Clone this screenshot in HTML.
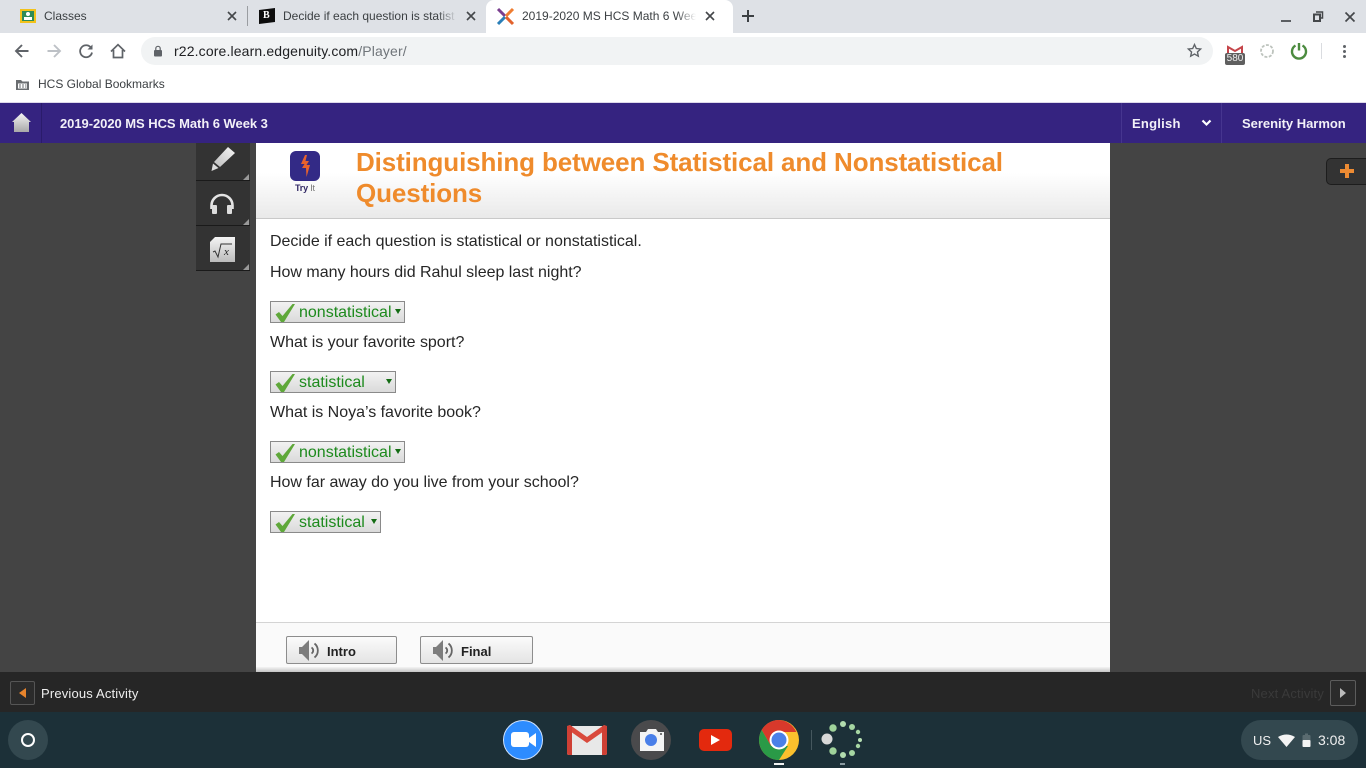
<!DOCTYPE html>
<html><head><meta charset="utf-8"><style>
html,body{margin:0;padding:0;width:1366px;height:768px;overflow:hidden;background:#444;font-family:"Liberation Sans",sans-serif}
.a{position:absolute}
.t{position:absolute;white-space:nowrap}
svg{position:absolute;overflow:visible}
.q{position:absolute;left:270px;font-size:16px;color:#262626;white-space:nowrap;line-height:20px;letter-spacing:-.015px}
.sel{position:absolute;left:270px;height:20px;border:1px solid #8a8a8a;background:linear-gradient(#f2f2f2,#dadada);box-sizing:content-box;color:#1d8a1d;font-size:16px;line-height:21px;white-space:nowrap}
.sel span{position:absolute;left:28px;top:0}
.sel i{position:absolute;top:7px;width:0;height:0;border-left:3px solid transparent;border-right:3px solid transparent;border-top:5px solid #146c14}
.btn{position:absolute;top:636px;height:26px;border:1px solid #8d8d8d;border-radius:2px;background:linear-gradient(#fbfbfb,#e4e4e4);font-size:13px;font-weight:bold;color:#222;line-height:29px}
.tab{position:absolute;font-size:12px;color:#3c4043;top:9px;white-space:nowrap;overflow:hidden}
</style></head><body>

<!-- tab strip -->
<div class="a" style="left:0;top:0;width:1366px;height:33px;background:#dee1e6"></div>
<div class="a" style="left:486px;top:0;width:247px;height:33px;background:#fff;border-radius:8px 8px 0 0"></div>
<div class="a" style="left:247px;top:6px;width:1px;height:20px;background:#9a9da1"></div>
<!-- classroom favicon -->
<div class="a" style="left:20px;top:9px;width:16px;height:14px;background:#f2c21b"></div>
<div class="a" style="left:22px;top:11px;width:12px;height:10px;background:#2e8b57"></div>
<div class="a" style="left:26px;top:12px;width:4px;height:4px;border-radius:2px;background:#fff"></div>
<div class="a" style="left:24px;top:17px;width:8px;height:3px;background:#fff"></div>
<div class="tab" style="left:44px">Classes</div>
<svg style="left:227px;top:11px" width="10" height="10" viewBox="0 0 10 10"><path d="M1 1L9 9M9 1L1 9" stroke="#44474a" stroke-width="1.600"/></svg>
<!-- brainly favicon -->
<svg style="left:259px;top:8px" width="16" height="16" viewBox="0 0 16 16"><path d="M0 2L16 0V14L0 16Z" fill="#0d0d0d"/></svg>
<div class="t" style="left:263px;top:10px;font:bold 10px 'Liberation Serif',serif;color:#fff">B</div>
<div class="tab" style="left:283px;width:174px">Decide if each question is statist</div>
<div class="a" style="left:437px;top:6px;width:20px;height:20px;background:linear-gradient(90deg,rgba(222,225,230,0),#dee1e6)"></div>
<svg style="left:466px;top:11px" width="10" height="10" viewBox="0 0 10 10"><path d="M1 1L9 9M9 1L1 9" stroke="#44474a" stroke-width="1.600"/></svg>
<!-- edgenuity favicon -->
<svg style="left:497px;top:8px" width="17" height="17" viewBox="0 0 17 17"><path d="M1 1L8 8" stroke="#7a3f8f" stroke-width="3"/><path d="M16 1L9 8" stroke="#ef7d31" stroke-width="3"/><path d="M1 16L8 9" stroke="#2a7fb8" stroke-width="3"/><path d="M16 16L9 9" stroke="#e2622c" stroke-width="3"/></svg>
<div class="tab" style="left:522px;width:174px">2019-2020 MS HCS Math 6 Week 3</div>
<div class="a" style="left:676px;top:6px;width:20px;height:20px;background:linear-gradient(90deg,rgba(255,255,255,0),#fff)"></div>
<svg style="left:705px;top:11px" width="10" height="10" viewBox="0 0 10 10"><path d="M1 1L9 9M9 1L1 9" stroke="#44474a" stroke-width="1.600"/></svg>
<svg style="left:741px;top:9px" width="14" height="14" viewBox="0 0 14 14"><path d="M7 1V13M1 7H13" stroke="#3c4043" stroke-width="2"/></svg>
<!-- window controls -->
<div class="a" style="left:1281px;top:20px;width:10px;height:2px;background:#5b5e62"></div>
<svg style="left:1313px;top:11px" width="10" height="11" viewBox="0 0 10 11"><path d="M3 1H9.500V7H7" fill="none" stroke="#44474a" stroke-width="1.500"/><rect x="1" y="3.500" width="6" height="6.500" fill="none" stroke="#44474a" stroke-width="2"/></svg>
<svg style="left:1345px;top:12px" width="10" height="10" viewBox="0 0 10 10"><path d="M0.500 0.500L9.500 9.500M9.500 0.500L0.500 9.500" stroke="#44474a" stroke-width="1.700"/></svg>

<!-- toolbar -->
<div class="a" style="left:0;top:33px;width:1366px;height:70px;background:#fff"></div>
<div class="a" style="left:141px;top:37px;width:1072px;height:28px;background:#f1f3f4;border-radius:14px"></div>
<svg style="left:14px;top:43px" width="16" height="16" viewBox="0 0 16 16"><path d="M14.500 8H2.500M8 2L2 8L8 14" fill="none" stroke="#5f6368" stroke-width="1.900"/></svg>
<svg style="left:46px;top:43px" width="16" height="16" viewBox="0 0 16 16"><path d="M1.500 8H13.500M8 2L14 8L8 14" fill="none" stroke="#bdc1c6" stroke-width="1.900"/></svg>
<svg style="left:78px;top:43px" width="16" height="16" viewBox="0 0 16 16"><path d="M13.200 5A6 6 0 1 0 14 9.500" fill="none" stroke="#5f6368" stroke-width="1.800"/><path d="M14.500 1.500V6.500H9.500Z" fill="#5f6368"/></svg>
<svg style="left:110px;top:43px" width="16" height="16" viewBox="0 0 16 16"><path d="M1 8.500L8 1.700L15 8.500M3.500 7V14.500H12.500V7" fill="none" stroke="#5f6368" stroke-width="1.700"/></svg>
<svg style="left:153px;top:45px" width="10" height="12" viewBox="0 0 10 12"><path d="M2.800 5V3.500a2.200 2.200 0 0 1 4.400 0V5" fill="none" stroke="#5f6368" stroke-width="1.200"/><rect x="1" y="5" width="8" height="6.500" rx="1" fill="#5f6368"/></svg>
<div class="t" style="left:174px;top:43px;font-size:14px;color:#202124;line-height:16px;letter-spacing:.14px">r22.core.learn.edgenuity.com<span style="color:#70757a">/Player/</span></div>
<svg style="left:1187px;top:43px" width="15" height="15" viewBox="0 0 24 24"><path d="M12 2.500l2.900 6.300 6.900.8-5.100 4.700 1.400 6.800L12 17.700 5.900 21.100l1.400-6.800L2.200 9.600l6.900-.8z" fill="none" stroke="#5f6368" stroke-width="2.200"/></svg>
<!-- gmail ext -->
<svg style="left:1227px;top:46px" width="16" height="8" viewBox="0 0 16 8"><path d="M1 8V1L8 5L15 1V8" fill="none" stroke="#c5454a" stroke-width="2"/></svg>
<div class="a" style="left:1225px;top:53px;width:20px;height:12px;background:#5f5f5f;border-radius:2px;color:#eee;font-size:10px;line-height:12px;text-align:center">580</div>
<svg style="left:1259px;top:43px" width="16" height="16" viewBox="0 0 16 16"><circle cx="8" cy="8" r="6" fill="none" stroke="#bdc3bd" stroke-width="1.800" stroke-dasharray="3 1.500"/></svg>
<svg style="left:1290px;top:42px" width="18" height="18" viewBox="0 0 18 18"><path d="M5.500 3.500A7 7 0 1 0 12.500 3.500" fill="none" stroke="#4c8b3f" stroke-width="2.400"/><path d="M9 1V8.500" stroke="#4c8b3f" stroke-width="2.400"/></svg>
<div class="a" style="left:1321px;top:43px;width:1px;height:16px;background:#dadce0"></div>
<div class="a" style="left:1343px;top:45px;width:3px;height:3px;border-radius:2px;background:#5f6368;box-shadow:0 5px 0 #5f6368,0 10px 0 #5f6368"></div>

<!-- bookmarks -->
<svg style="left:15px;top:78px" width="15" height="13" viewBox="0 0 15 13"><path d="M1 2H6L7.500 3.500H14V12H1Z" fill="#6a6d70"/><path d="M3 5.500H12V10.500H3Z" fill="#fff"/><path d="M4 6.500H6V7.500H4ZM7 6.500H9V7.500H7ZM10 6.500H11.500V7.500H10ZM4 8.500H6V9.500H4ZM7 8.500H9V9.500H7ZM10 8.500H11.500V9.500H10Z" fill="#6a6d70"/></svg>
<div class="t" style="left:38px;top:77px;font-size:12px;color:#3c4043;line-height:14px">HCS Global Bookmarks</div>

<!-- stage -->
<div class="a" style="left:0;top:143px;width:1366px;height:529px;background:#444"></div>

<!-- purple nav -->
<div class="a" style="left:0;top:103px;width:1366px;height:40px;background:#352380;box-shadow:0 -1px 0 #ddd8ea"></div>
<div class="a" style="left:41px;top:103px;width:1px;height:40px;background:#2a1b6b"></div>
<div class="a" style="left:1121px;top:103px;width:1px;height:40px;background:#46358f"></div>
<div class="a" style="left:1221px;top:103px;width:1px;height:40px;background:#46358f"></div>
<svg style="left:12px;top:112px" width="19" height="20" viewBox="0 0 19 20"><defs><linearGradient id="h" x1="0" y1="0" x2="0" y2="1"><stop offset="0" stop-color="#f4f4f4"/><stop offset="1" stop-color="#a8a8a8"/></linearGradient></defs><path d="M9.500 1L19 10H17V20H2V10H0Z" fill="url(#h)"/></svg>
<div class="t" style="left:60px;top:116px;font-size:13px;font-weight:bold;color:#f2f0f8;line-height:16px;letter-spacing:-.05px">2019-2020 MS HCS Math 6 Week 3</div>
<div class="t" style="left:1132px;top:116px;font-size:13px;font-weight:bold;color:#f2f0f8;line-height:16px;letter-spacing:.25px">English</div>
<svg style="left:1201px;top:119px" width="11" height="8" viewBox="0 0 11 8"><path d="M1.500 1.500L5.500 5.500L9.500 1.500" fill="none" stroke="#fff" stroke-width="2.200"/></svg>
<div class="t" style="left:1242px;top:116px;font-size:13px;font-weight:bold;color:#f2f0f8;line-height:16px;letter-spacing:-.02px">Serenity Harmon</div>

<!-- side tools -->
<div class="a" style="left:196px;top:143px;width:54px;height:37px;background:#333;border-bottom:1px solid #1a1a1a"></div>
<div class="a" style="left:196px;top:181px;width:54px;height:44px;background:#333;border-bottom:1px solid #1a1a1a"></div>
<div class="a" style="left:196px;top:226px;width:54px;height:44px;background:#333;border-bottom:1px solid #1a1a1a"></div>
<div class="a" style="left:243px;top:174px;border-left:6px solid transparent;border-bottom:6px solid #999"></div>
<div class="a" style="left:243px;top:219px;border-left:6px solid transparent;border-bottom:6px solid #999"></div>
<div class="a" style="left:243px;top:264px;border-left:6px solid transparent;border-bottom:6px solid #999"></div>
<svg style="left:210px;top:146px" width="26" height="26" viewBox="0 0 26 26"><defs><linearGradient id="p" x1="1" y1="0" x2="0" y2="1"><stop offset="0" stop-color="#f6f6f6"/><stop offset="1" stop-color="#bdbdbd"/></linearGradient></defs><path d="M18 1L25 7L10 21L4 16Z" fill="url(#p)"/><path d="M3 17.500L8.500 22L1.500 25Z" fill="#ddd"/></svg>
<svg style="left:208px;top:194px" width="28" height="21" viewBox="0 0 28 21"><path d="M3.500 15V11.500A10.500 10.500 0 0 1 24.500 11.500V15" fill="none" stroke="#e4e4e4" stroke-width="2.600"/><rect x="4" y="11" width="5" height="9" rx="1" fill="#ddd"/><rect x="19" y="11" width="5" height="9" rx="1" fill="#ddd"/></svg>
<div class="a" style="left:210px;top:237px;width:25px;height:25px;background:linear-gradient(#f4f4f4,#bcbcbc)"></div>
<div class="a" style="left:210px;top:237px;border-right:5px solid transparent;border-top:5px solid #333"></div>
<svg style="left:213px;top:243px" width="20" height="16" viewBox="0 0 20 16"><path d="M0 9L2 8L5 14L8 1H19" fill="none" stroke="#333" stroke-width="1"/></svg>
<div class="t" style="left:224px;top:246px;font:italic 11px 'Liberation Serif',serif;color:#222">x</div>

<!-- plus tab -->
<div class="a" style="left:1326px;top:158px;width:40px;height:27px;background:#333;border:1px solid #1d1d1d;border-right:none;border-radius:5px 0 0 5px;box-sizing:border-box"></div>
<div class="a" style="left:1340px;top:169px;width:14px;height:4px;background:#ed8b33"></div>
<div class="a" style="left:1345px;top:164px;width:4px;height:14px;background:#ed8b33"></div>

<!-- content -->
<div class="a" style="left:256px;top:143px;width:854px;height:529px;background:#fff"></div>
<div class="a" style="left:256px;top:143px;width:854px;height:75px;background:linear-gradient(#fff 40%,#e9e9e9);border-bottom:1px solid #c9c9c9"></div>
<div class="a" style="left:290px;top:151px;width:30px;height:30px;background:#332a86;border-radius:6px"></div>
<svg style="left:299px;top:154px" width="12" height="24" viewBox="0 0 12 24"><path d="M6 1L2 10L5.500 10L3 14L7 14L7.500 23L11 11L7.500 11L10 7L6.500 7L8 1Z" fill="#e8622c"/></svg>
<div class="t" style="left:295px;top:183px;font-size:9px;font-weight:bold;line-height:10px;color:#332a66;letter-spacing:-.2px">Try <span style="color:#777;font-weight:normal">It</span></div>
<div class="t" style="left:356px;top:147px;font-size:26px;font-weight:bold;color:#ef8b2c;line-height:31px;letter-spacing:-.115px">Distinguishing between Statistical and Nonstatistical<br>Questions</div>

<div class="q" style="top:232px">Decide if each question is statistical or nonstatistical.</div>
<div class="q" style="top:263px">How many hours did Rahul sleep last night?</div>
<div class="sel" style="top:301px;width:133px"><svg style="left:4px;top:3px" width="20" height="16" viewBox="0 0 20 16"><path d="M0.500 9.500L4 7L7.500 11L17.500 -1H20L9 17H6Z" fill="#5fa83a"/></svg><span>nonstatistical</span><i style="left:124px"></i></div>
<div class="q" style="top:333px">What is your favorite sport?</div>
<div class="sel" style="top:371px;width:124px"><svg style="left:4px;top:3px" width="20" height="16" viewBox="0 0 20 16"><path d="M0.500 9.500L4 7L7.500 11L17.500 -1H20L9 17H6Z" fill="#5fa83a"/></svg><span>statistical</span><i style="left:115px"></i></div>
<div class="q" style="top:403px">What is Noya’s favorite book?</div>
<div class="sel" style="top:441px;width:133px"><svg style="left:4px;top:3px" width="20" height="16" viewBox="0 0 20 16"><path d="M0.500 9.500L4 7L7.500 11L17.500 -1H20L9 17H6Z" fill="#5fa83a"/></svg><span>nonstatistical</span><i style="left:124px"></i></div>
<div class="q" style="top:473px">How far away do you live from your school?</div>
<div class="sel" style="top:511px;width:109px"><svg style="left:4px;top:3px" width="20" height="16" viewBox="0 0 20 16"><path d="M0.500 9.500L4 7L7.500 11L17.500 -1H20L9 17H6Z" fill="#5fa83a"/></svg><span>statistical</span><i style="left:100px"></i></div>

<!-- footer of content -->
<div class="a" style="left:256px;top:622px;width:854px;height:50px;background:#fafafa;border-top:1px solid #d4d4d4;box-sizing:border-box"></div>
<div class="a" style="left:256px;top:667px;width:854px;height:5px;background:linear-gradient(#f4f4f4,#c4c4c4)"></div>
<div class="btn" style="left:286px;width:109px"><svg style="left:12px;top:3px" width="20" height="21" viewBox="0 0 20 21"><path d="M0 7H3L10 0V21L3 14H0Z" fill="#7d7d7d"/><path d="M12.500 7.500A3.500 3.500 0 0 1 12.500 13.500M15.500 3.500A9 9 0 0 1 15.500 17.500" fill="none" stroke="#666" stroke-width="1.800"/></svg><span style="position:absolute;left:40px;top:0">Intro</span></div>
<div class="btn" style="left:420px;width:111px"><svg style="left:12px;top:3px" width="20" height="21" viewBox="0 0 20 21"><path d="M0 7H3L10 0V21L3 14H0Z" fill="#7d7d7d"/><path d="M12.500 7.500A3.500 3.500 0 0 1 12.500 13.500M15.500 3.500A9 9 0 0 1 15.500 17.500" fill="none" stroke="#666" stroke-width="1.800"/></svg><span style="position:absolute;left:40px;top:0">Final</span></div>

<!-- activity bar -->
<div class="a" style="left:0;top:672px;width:1366px;height:40px;background:#262626"></div>
<div class="a" style="left:10px;top:681px;width:25px;height:24px;border:1px solid #555;border-radius:2px;box-sizing:border-box;background:#2b2b2b"></div>
<div class="a" style="left:19px;top:688px;border-right:7px solid #e8842c;border-top:5px solid transparent;border-bottom:5px solid transparent"></div>
<div class="t" style="left:41px;top:686px;font-size:13px;color:#eee;line-height:16px;letter-spacing:.17px">Previous Activity</div>
<div class="t" style="left:1251px;top:686px;font-size:13px;color:#3a3a3a;line-height:16px;letter-spacing:.17px">Next Activity</div>
<div class="a" style="left:1330px;top:680px;width:26px;height:26px;border:1px solid #5c5c5c;border-radius:2px;box-sizing:border-box;background:#2b2b2b"></div>
<div class="a" style="left:1340px;top:688px;border-left:6px solid #bbb;border-top:5px solid transparent;border-bottom:5px solid transparent"></div>

<!-- shelf -->
<div class="a" style="left:0;top:712px;width:1366px;height:56px;background:#1c3038"></div>
<div class="a" style="left:8px;top:720px;width:40px;height:40px;border-radius:20px;background:#33484f"></div>
<div class="a" style="left:21px;top:733px;width:14px;height:14px;border:2px solid #fff;border-radius:50%;box-sizing:border-box"></div>
<!-- zoom -->
<div class="a" style="left:503px;top:720px;width:40px;height:40px;border-radius:20px;background:#2d8cff;border:1px solid #cfe3ff;box-sizing:border-box"></div>
<div class="a" style="left:511px;top:732px;width:18px;height:15px;background:#fff;border-radius:3px"></div>
<svg style="left:529px;top:732px" width="8" height="16" viewBox="0 0 8 16"><path d="M0 6L7 1V15L0 10Z" fill="#fff"/></svg>
<!-- gmail -->
<svg style="left:566px;top:724px" width="42" height="32" viewBox="0 0 42 32"><rect x="1" y="2" width="40" height="29" rx="2" fill="#e8e8e8"/><path d="M1 5L21 19L41 5V2L38 1L21 13L4 1L1 2Z" fill="#d94a3d"/><path d="M1 2H6V31H3Q1 31 1 29Z" fill="#cf4035"/><path d="M36 2H41V29Q41 31 39 31H36Z" fill="#cf4035"/></svg>
<!-- camera -->
<div class="a" style="left:631px;top:720px;width:40px;height:40px;border-radius:20px;background:#4a4a4c"></div>
<svg style="left:639px;top:728px" width="26" height="24" viewBox="0 0 26 24"><path d="M1 4H7L9 1H17L19 4H25V23H1Z" fill="#f4f4f4"/></svg>
<div class="a" style="left:645px;top:734px;width:12px;height:12px;border-radius:6px;background:#4a7fe8"></div>
<div class="a" style="left:660px;top:733px;width:2px;height:2px;background:#777"></div>
<!-- youtube -->
<div class="a" style="left:699px;top:729px;width:33px;height:22px;border-radius:5px;background:#e3290e"></div>
<div class="a" style="left:711px;top:735px;border-left:9px solid #fff;border-top:5px solid transparent;border-bottom:5px solid transparent"></div>
<!-- chrome -->
<svg style="left:758px;top:719px" width="42" height="42" viewBox="0 0 42 42"><circle cx="21" cy="21" r="20" fill="#fbc02d"/><path d="M21 1A20 20 0 0 0 3.700 11L13 27L21 13H38.300A20 20 0 0 0 21 1Z" fill="#d8392b"/><path d="M3.700 11A20 20 0 0 0 21 41L30 27H13Z" fill="#2a9a47"/><circle cx="21" cy="21" r="9.500" fill="#fff"/><circle cx="21" cy="21" r="7.500" fill="#4a80e8"/></svg>
<div class="a" style="left:774px;top:763px;width:10px;height:2px;background:#f2f2f2"></div>
<div class="a" style="left:811px;top:730px;width:1px;height:20px;background:#45575e"></div>
<!-- spinner -->
<svg style="left:820px;top:719px" width="44" height="44" viewBox="0 0 44 44">
<circle cx="13" cy="9" r="3.700" fill="#9fd29a"/><circle cx="23" cy="5" r="3" fill="#b2dcae"/><circle cx="32" cy="8" r="3" fill="#a6d6a2"/><circle cx="38" cy="13" r="2.200" fill="#a6d6a2"/><circle cx="40" cy="21" r="2" fill="#b8e0b4"/><circle cx="38" cy="27" r="2.200" fill="#a6d6a2"/><circle cx="32" cy="34" r="3" fill="#a6d6a2"/><circle cx="23" cy="36" r="3" fill="#b2dcae"/><circle cx="13" cy="32" r="3.700" fill="#9fd29a"/><circle cx="7" cy="20" r="5.500" fill="#d8d8d8"/></svg>
<div class="a" style="left:840px;top:763px;width:5px;height:2px;background:#8a9aa0"></div>
<!-- status tray -->
<div class="a" style="left:1241px;top:720px;width:117px;height:40px;border-radius:20px;background:#33484f"></div>
<div class="t" style="left:1253px;top:733px;font-size:13px;color:#f0f0f0;line-height:16px">US</div>
<svg style="left:1278px;top:734px" width="17" height="13" viewBox="0 0 17 13"><path d="M0 3Q8.500 -2 17 3L8.500 13Z" fill="#f4f4f4"/></svg>
<svg style="left:1302px;top:733px" width="9" height="14" viewBox="0 0 9 14"><rect x="0.500" y="2" width="8" height="12" rx="1" fill="#5a6b70"/><rect x="3" y="0.500" width="3" height="2" fill="#5a6b70"/><rect x="0.500" y="7" width="8" height="7" rx="1" fill="#f4f4f4"/></svg>
<div class="t" style="left:1318px;top:732px;font-size:14px;color:#f0f0f0;line-height:16px">3:08</div>
</body></html>
